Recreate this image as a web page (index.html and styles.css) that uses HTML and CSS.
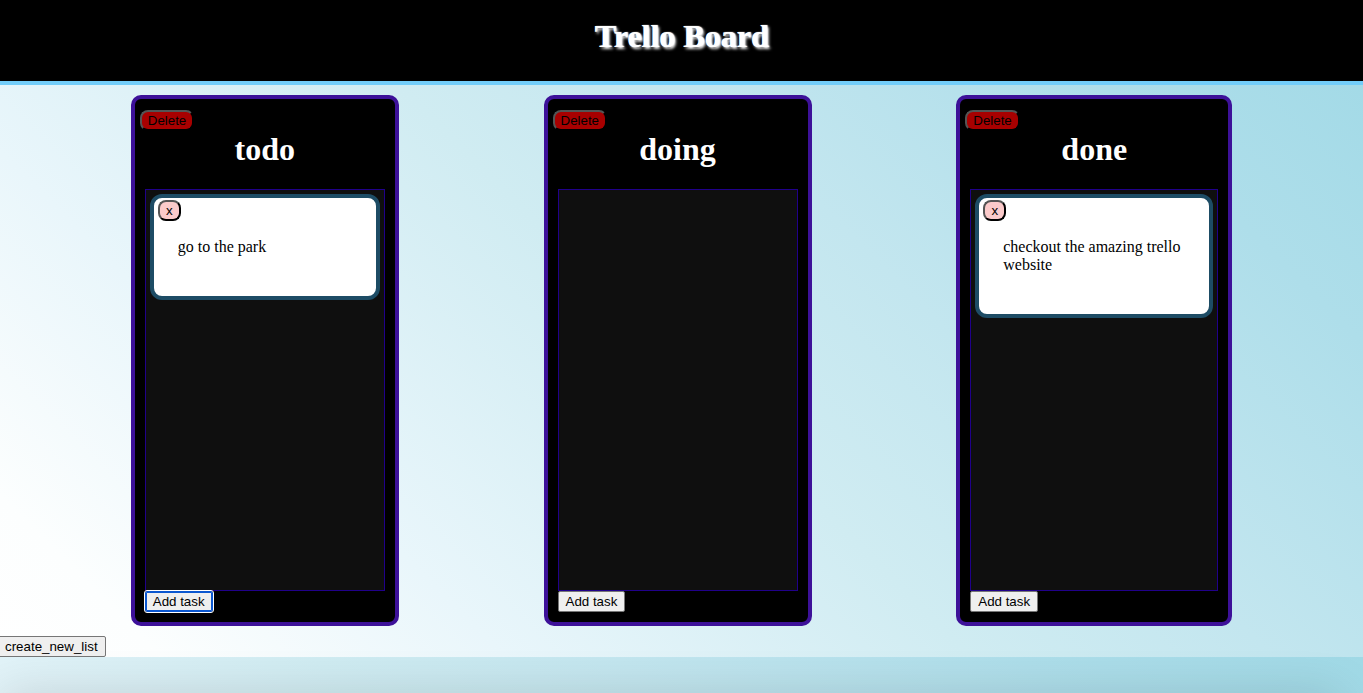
FILE: index.html
```html
<!DOCTYPE html>
<html lang="en">
<head>
<meta charset="utf-8">
<title>Trello Board</title>
<link rel="stylesheet" href="styles.css">
</head>
<body>
<header class="header"><h1 class="title">Trello Board</h1></header>
<main>
  <div class="board">
    <section class="column">
      <button class="delete" type="button">Delete</button>
      <h2 class="name">todo</h2>
      <div class="list">
        <article class="card">
          <button class="remove" type="button">x</button>
          <p class="text">go to the park</p>
        </article>
      </div>
      <button class="button add active" type="button">Add task</button>
    </section>
    <section class="column">
      <button class="delete" type="button">Delete</button>
      <h2 class="name">doing</h2>
      <div class="list"></div>
      <button class="button add" type="button">Add task</button>
    </section>
    <section class="column wide">
      <button class="delete" type="button">Delete</button>
      <h2 class="name">done</h2>
      <div class="list">
        <article class="card">
          <button class="remove" type="button">x</button>
          <p class="text">checkout the amazing trello website</p>
        </article>
      </div>
      <button class="button add" type="button">Add task</button>
    </section>
  </div>
  <button class="button create" type="button">create_new_list</button>
</main>
<div class="shade"></div>
</body>
</html>
```
FILE: styles.css
```css
* { box-sizing: border-box; }

body {
  margin: 0;
  font-family: "Liberation Serif", "Times New Roman", serif;
  font-size: 16px;
  line-height: 18px;
  background: linear-gradient(45deg, #ffffff 0%, #fcfefe 8%, #e9f6fb 25%, #d0ecf2 48%, #c3e6ef 63%, #aedeea 83%, #a0d9e6 100%);
}

.header {
  padding: 18px 0 26px;
  background: #000;
  border-bottom: 4px solid #72cdf9;
}

.title {
  margin: 0;
  font-size: 32px;
  line-height: 37px;
  text-align: center;
  color: #fff;
  text-shadow: 1px 0 1px #fff, 2px 2px 3px #fff;
}

.board {
  display: flex;
  justify-content: space-evenly;
}

.column {
  display: flex;
  flex-direction: column;
  align-items: flex-start;
  width: 268px;
  margin: 10px 14px;
  padding: 11px 10px 10px;
  background: #000;
  border: 4px solid #3d1199;
  border-radius: 10px;
}

.wide { width: 276px; }

.delete, .remove, .button {
  font-family: "Liberation Sans", Arial, sans-serif;
  font-size: smaller;
  line-height: 15px;
  color: #000;
}

.delete {
  margin: 0 0 0 -5px;
  padding: 1px 6px;
  height: 21px;
  background: #a80000;
  border: 2px outset #000;
  border-radius: 8px;
}

.name {
  align-self: stretch;
  margin: 0 0 21px;
  font-size: 32px;
  line-height: 37px;
  text-align: center;
  color: #fff;
}

.list {
  align-self: stretch;
  min-height: 402px;
  padding: 4px;
  background: #0f0f0f;
  border: 1px solid #20008a;
}

.card {
  padding: 2px 4px 24px;
  background: #fff;
  border: 4px solid #1d4c65;
  border-radius: 12px;
}

.remove {
  display: block;
  width: 23px;
  height: 21px;
  padding: 0;
  background: #fbcaca;
  border: 2px outset #000;
  border-radius: 8px;
}

.text { margin: 17px 20px 16px; }

.button {
  padding: 2px 7px;
  background: #efefef;
  border: 1px solid #767676;
  border-radius: 2px;
}

.active {
  border-color: #0b57d0;
  box-shadow: inset 0 0 0 1px #0b57d0;
  outline: 1px solid #fff;
}

.create {
  display: block;
  margin-left: -3px;
}

/* soft shadow rising from the bottom edge of the window */
.shade {
  position: fixed;
  left: 0;
  right: 24px;
  bottom: -30px;
  height: 20px;
  box-shadow: 0 0 50px rgba(0, 0, 0, 0.28);
  pointer-events: none;
}
```
